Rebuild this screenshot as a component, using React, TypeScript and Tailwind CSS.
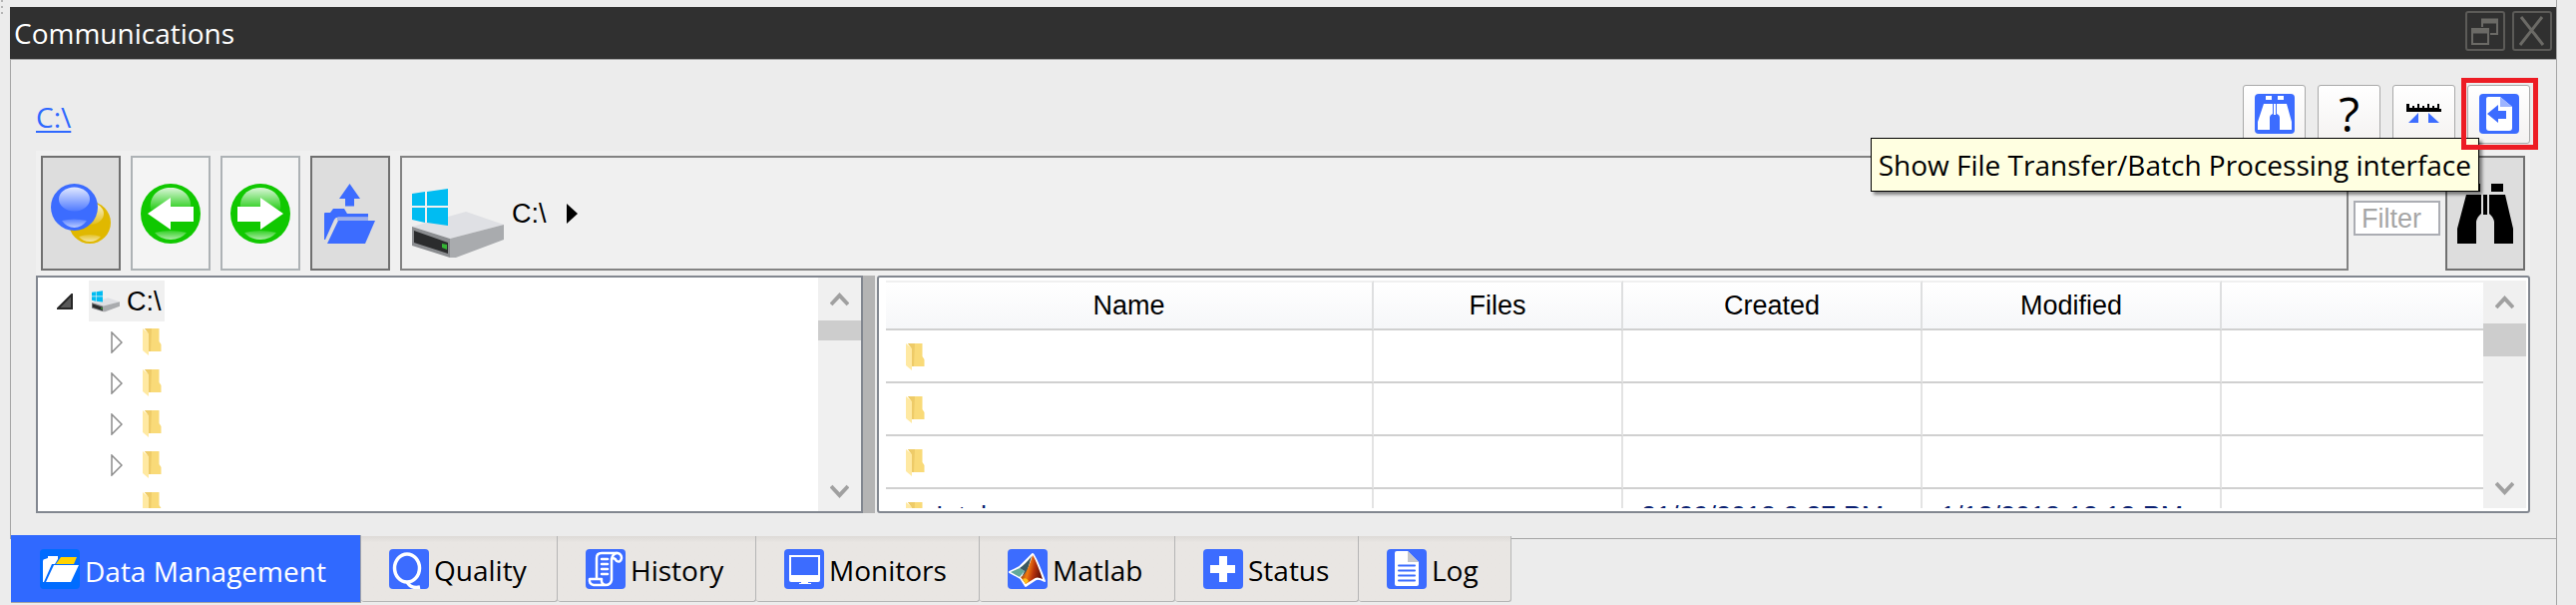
import type { ReactNode } from 'react';

const TEXT = "font-['Open_Sans','Noto_Sans',sans-serif]";
const ARIAL = "font-['Liberation_Sans',Arial,sans-serif]";

/* ---------- Icons ---------- */

function DriveIcon({ className }: { className: string }) {
  return (
    <svg className={className} viewBox="0 0 92 70" aria-hidden="true">
      <path d="M0 38 54 23 92 36 38 50Z" fill="#dfe0e4" />
      <path d="M38 50 92 36V51L44 69 38 69Z" fill="#a9abae" />
      <path d="M0 38 38 50V69L0 57Z" fill="#8b8d90" />
      <path d="M2 42 36 54V65L2 54Z" fill="#2b2c2d" />
      <path d="M30 55 35 56V61L30 59Z" fill="#35b335" />
      <path d="M0 5 13 3V17H0ZM15 3 36 0V17H15ZM0 19H13V34L0 31ZM15 19H36V37L15 34Z" fill="#00bcf2" />
    </svg>
  );
}

function FolderIcon({ className }: { className: string }) {
  return (
    <svg className={className} viewBox="0 0 19 27" aria-hidden="true">
      <path d="M2 0H16.500V13L18.500 16V23H5V4Z" fill="#f9da78" />
      <path d="M2 0H9L8 23H5V4Z" fill="#eecb68" />
      <path d="M0 0 6 5V27L0 22Z" fill="#ffe9a2" />
    </svg>
  );
}

function BallsIcon() {
  return (
    <svg className="size-[60px]" viewBox="0 0 60 60" aria-hidden="true">
      <defs>
        <linearGradient id="ballShine" x1="0" y1="0" x2="0" y2="1">
          <stop offset="0" stopColor="#fff" stopOpacity="0.85" />
          <stop offset="1" stopColor="#fff" stopOpacity="0.1" />
        </linearGradient>
        <linearGradient id="ballGlow" x1="0" y1="0" x2="0" y2="1">
          <stop offset="0" stopColor="#fff" stopOpacity="0.15" />
          <stop offset="1" stopColor="#fff" stopOpacity="0.65" />
        </linearGradient>
      </defs>
      <circle cx="39" cy="39" r="21" fill="#e0b800" />
      <ellipse cx="39" cy="30" rx="14" ry="11" fill="url(#ballShine)" />
      <path d="M28 53Q39 49 50 53Q46 58 39 58Q32 58 28 53Z" fill="url(#ballGlow)" />
      <circle cx="23.500" cy="23.500" r="23.500" fill="#3c6cff" />
      <ellipse cx="23.500" cy="15.500" rx="15.500" ry="12" fill="url(#ballShine)" />
      <path d="M11 37Q23 34 36 37Q31 44 23.500 44Q16 44 11 37Z" fill="url(#ballGlow)" />
    </svg>
  );
}

function ArrowIcon({ flip }: { flip?: boolean }) {
  return (
    <svg className={flip ? 'size-[60px] -scale-x-100' : 'size-[60px]'} viewBox="0 0 60 60" aria-hidden="true">
      <circle cx="30" cy="30" r="30" fill="#10c800" />
      <path d="M10 26C8 12 18 4 30 4S52 12 50 26Z" fill="url(#ballShine)" />
      <path d="M14 49Q30 45 46 49Q40 56 30 56Q20 56 14 49Z" fill="url(#ballGlow)" />
      <path d="M7 30 30 14V23H53V38H30V46Z" fill="#fff" />
    </svg>
  );
}

function FolderUpIcon() {
  return (
    <svg className="size-[60px]" viewBox="0 0 60 60" aria-hidden="true">
      <g fill="#3c6cff">
        <path d="M29.500 0 40 15H34V22.500H25V15H19Z" />
        <path d="M4 30Q4 29 5 29H10L13 25H24L27 30H48V33.500H18Q15 33.500 14 36L5 56H4Z" />
        <path d="M18 37H55L45 60H7Z" />
        <path d="M17 34H48V37H17Z" opacity="0.4" />
      </g>
    </svg>
  );
}

function BinocularsIcon() {
  return (
    <svg className="size-[60px]" viewBox="0 0 60 60" aria-hidden="true">
      <path d="M12 0H25V8H12ZM36 0H48V8H36Z" />
      <path d="M11 11H26V30Q22 33 21 38V60H2V45ZM34 11H50L58 45V60H39V38Q38 33 34 30ZM28 11H32V31H28Z" />
    </svg>
  );
}

function Tile({ children, fill = '#3c6cff' }: { children: ReactNode; fill?: string }) {
  return (
    <svg className="size-10 shrink-0" viewBox="0 0 40 40" aria-hidden="true">
      <rect width="40" height="40" rx="4" fill={fill} />
      {children}
    </svg>
  );
}

function SmallBinoculars() {
  return (
    <Tile>
      <path
        d="M11 2H17V6H11ZM23 2H29V6H23ZM9 10H18V20Q15 21 15 24V36H3V28ZM22 10H32L37 28V36H25V24Q25 21 22 20ZM19 10H21V21H19Z"
        fill="#fff"
      />
    </Tile>
  );
}

function RulerIcon() {
  return (
    <svg className="size-10" viewBox="0 0 40 40" aria-hidden="true">
      <path d="M2 10H5V14H8V12H10V14H13V10H15V14H18V12H20V14H23V10H25V14H28V12H30V14H33V10H35V15H37V18H2Z" />
      <path d="M14 19V29H4ZM24 19V29H35Z" fill="#3c6cff" />
    </svg>
  );
}

function TransferIcon() {
  return (
    <Tile>
      <path d="M9 3H21L33 13V34Q33 37 30 37H10Q7 37 7 34V5Q7 3 9 3Z" fill="#fff" />
      <path d="M21 3 33 13H21Z" fill="#9db4ff" />
      <path d="M8 20 19 11V17H27V25H19V29Z" fill="#3c6cff" />
    </Tile>
  );
}

function DataIcon() {
  return (
    <Tile fill="#006cff">
      <path d="M3 12Q3 10 5 10L8 9V7H18V10L15 15H12L4 33H3Z" fill="#fff" />
      <path d="M21 8H37L34 15H16Z" fill="#ffd200" />
      <path d="M14 16H39L31 33H6Z" fill="#fff" />
    </Tile>
  );
}

function QualityIcon() {
  return (
    <Tile>
      <ellipse cx="18" cy="19" rx="12.500" ry="14" fill="none" stroke="#fff" strokeWidth="3.500" />
      <path d="M18 33Q22 40 31 38" fill="none" stroke="#fff" strokeWidth="3.500" />
    </Tile>
  );
}

function HistoryIcon() {
  return (
    <Tile>
      <g fill="none" stroke="#fff" strokeWidth="2.500" strokeLinejoin="round" strokeLinecap="round">
        <path d="M11 30V9Q11 4 16 4H32Q36 5 36 9Q35 14 31 12Q29 8 26 10V31Q25 36 20 36H8Q3 35 4 30H16Q15 35 20 36" />
        <path d="M31 4Q27 5 26 10" />
        <path d="M16 10H22M16 15H22M16 20H22M16 25H22" />
      </g>
    </Tile>
  );
}

function MonitorIcon() {
  return (
    <Tile>
      <path fillRule="evenodd" d="M5 6H36V31Q36 33 34 33H24V34H27V35H15V34H17V33H7Q5 33 5 31ZM7 8V26H34V8Z" fill="#fff" />
    </Tile>
  );
}

function MatlabIcon() {
  return (
    <Tile>
      <defs>
        <linearGradient id="peak" x1="0" y1="0" x2="1" y2="0.300">
          <stop offset="0" stopColor="#5c1a0c" />
          <stop offset="0.450" stopColor="#f07a10" />
          <stop offset="0.700" stopColor="#b8330b" />
          <stop offset="1" stopColor="#6b1407" />
        </linearGradient>
      </defs>
      <path
        d="M2 23 12 18Q18 12 25 5Q28 8 37 32Q30 28 27 31L18 37L13 29Z"
        fill="#fff"
        stroke="#fff"
        strokeWidth="2"
        strokeLinejoin="round"
      />
      <path d="M3 23 12 19 17 22 12 28Z" fill="#62a99a" />
      <path d="M12 19Q18 15 24 7L19 24 14 28 17 22Z" fill="#3b5961" />
      <path d="M25 6Q28 10 35 30Q29 27 26 30L18 35 13 28Q19 26 25 6Z" fill="url(#peak)" />
      <path d="M15 30Q19 28 21 32L18 35Z" fill="#ffc21a" />
    </Tile>
  );
}

function StatusIcon() {
  return (
    <Tile>
      <path d="M16 7H24V16H32V24H24V33H16V24H7V16H16Z" fill="#fff" />
    </Tile>
  );
}

function LogIcon() {
  return (
    <Tile>
      <path d="M10 2H21L32 13V35Q32 37 30 37H10Q8 37 8 35V4Q8 2 10 2Z" fill="#fff" />
      <path d="M21 2 32 13H21Z" fill="#c4c6ca" />
      <path d="M12 16.500H28M12 21.500H28M12 26.500H28M12 31.500H28" stroke="#3c6cff" strokeWidth="2" strokeLinecap="round" />
    </Tile>
  );
}

/* ---------- Data ---------- */

const tabs = [
  { label: 'Quality', icon: <QualityIcon />, width: 'w-[197px]' },
  { label: 'History', icon: <HistoryIcon />, width: 'w-[199px]' },
  { label: 'Monitors', icon: <MonitorIcon />, width: 'w-[224px]' },
  { label: 'Matlab', icon: <MatlabIcon />, width: 'w-[196px]' },
  { label: 'Status', icon: <StatusIcon />, width: 'w-[184px]' },
  { label: 'Log', icon: <LogIcon />, width: 'w-[153px]' },
];

const columns = ['Name', 'Files', 'Created', 'Modified', ''];

const rows = [
  { name: '', files: '', created: '', modified: '' },
  { name: '', files: '', created: '', modified: '' },
  { name: '', files: '', created: '', modified: '' },
  { name: 'Intel', files: '', created: '21/09/2018 8:27 PM', modified: '1/12/2018 12:12 PM' },
];

/* ---------- Building blocks ---------- */

function SmallButton({ label, children }: { label: string; children: ReactNode }) {
  return (
    <button
      aria-label={label}
      className="flex h-[59px] w-[63px] justify-center rounded-[3px] border border-[#a9a9a9] bg-linear-to-b from-white to-[#f4f2f1] pt-2"
    >
      {children}
    </button>
  );
}

function NavButton({ label, muted, children }: { label: string; muted?: boolean; children: ReactNode }) {
  return (
    <button
      aria-label={label}
      className={`flex h-[115px] w-20 shrink-0 items-center justify-center border-2 ${
        muted ? 'border-[#adb2b5] bg-[#f4f4f4]' : 'border-[#707070] bg-[#dddddd]'
      }`}
    >
      {children}
    </button>
  );
}

function Chevron({ down }: { down?: boolean }) {
  return (
    <svg className={down ? 'h-4 w-[19px] rotate-180' : 'h-4 w-[19px]'} viewBox="0 0 19 16" aria-hidden="true">
      <path d="M1 13 9.500 4 18 13" fill="none" stroke="#a0a0a0" strokeWidth="4" />
    </svg>
  );
}

function ScrollBar({ thumb }: { thumb: ReactNode }) {
  return (
    <div className="flex w-[43px] shrink-0 flex-col items-center bg-[#f0f0f0]">
      <button aria-label="Scroll up" className="flex h-[43px] items-center">
        <Chevron />
      </button>
      {thumb}
      <button aria-label="Scroll down" className="mt-auto flex h-10 items-center">
        <Chevron down />
      </button>
    </div>
  );
}

export default function App() {
  return (
    <div className={`flex min-h-screen bg-[#ececec] text-[28px] leading-10 text-black ${TEXT}`}>
      {/* Drag grip */}
      <div className="flex w-[10px] shrink-0 flex-col gap-1 pl-px">
        <span className="size-[2px] bg-[#b5b5b5]" />
        <span className="size-[2px] bg-[#b5b5b5]" />
        <span className="size-[2px] bg-[#b5b5b5]" />
      </div>

      <main className="min-w-0 flex-1 border-r border-[#a5a5a5] pt-[7px]">
        {/* Title bar */}
        <header className="flex h-[52px] items-center justify-between bg-[#303030] pr-1 pl-1">
          <h1 className="text-white">Communications</h1>
          <div className="flex gap-[7px] pb-1">
            <button aria-label="Restore" className="size-10 rounded-[3px] border-2 border-[#5c5b58]">
              <svg viewBox="0 0 36 36" fill="none" stroke="#6b6a66" strokeWidth="2" aria-hidden="true">
                <path d="M15 14V7H30V21H23M15 9H30M5 16H21V31H5ZM5 18H21" />
                <path d="M14 8H31M4 18H22" strokeWidth="5" />
              </svg>
            </button>
            <button aria-label="Close" className="size-10 rounded-[3px] border-2 border-[#5c5b58]">
              <svg viewBox="0 0 36 36" fill="none" stroke="#6b6a66" strokeWidth="3" aria-hidden="true">
                <path d="M7 4 29 32M28 4 6 32" />
              </svg>
            </button>
          </div>
        </header>

        <section className="border border-r-0 border-[#a5a5a5] pr-[26px] pb-[25px] pl-[25px]">
          <div className="flex justify-between pt-[25px] pb-[7px]">
            <a href="#root" className="mt-3 self-start text-[#2f68ff] underline decoration-2 underline-offset-[3px]">
              C:\
            </a>
            <div className="flex gap-3">
              <SmallButton label="Find">
                <SmallBinoculars />
              </SmallButton>
              <SmallButton label="Help">
                <span className="text-[48px] leading-10">?</span>
              </SmallButton>
              <SmallButton label="Measure">
                <RulerIcon />
              </SmallButton>
              <div className="relative">
                <SmallButton label="File transfer">
                  <TransferIcon />
                </SmallButton>
                <div
                  role="tooltip"
                  className="absolute top-[53px] right-[51px] z-10 border border-black bg-[#ffffe1] px-[7px] py-[6px] whitespace-nowrap shadow-[3px_3px_3px_rgba(0,0,0,0.45)]"
                >
                  Show File Transfer/Batch Processing interface
                </div>
                <div className="pointer-events-none absolute -top-[7px] -right-2 -bottom-[6px] -left-[6px] z-20 border-5 border-[#ed1c24]" />
              </div>
            </div>
          </div>

          {/* Navigation toolbar */}
          <div className="flex items-center bg-[#f0f0f0] p-[5px]">
            <div className="flex gap-[10px]">
              <NavButton label="Places">
                <BallsIcon />
              </NavButton>
              <NavButton label="Back" muted>
                <ArrowIcon />
              </NavButton>
              <NavButton label="Forward" muted>
                <ArrowIcon flip />
              </NavButton>
              <NavButton label="Up one level">
                <FolderUpIcon />
              </NavButton>
            </div>
            <div className={`ml-[10px] flex h-[115px] flex-1 items-center border-2 border-[#838383] pl-[10px] text-[27px] ${ARIAL}`}>
              <DriveIcon className="mt-5 h-[70px] w-[92px]" />
              <span className="ml-2">C:\</span>
              <svg className="ml-5 h-5 w-[11px]" viewBox="0 0 11 20" aria-hidden="true">
                <path d="M0 0 11 10 0 20Z" />
              </svg>
            </div>
            <input
              aria-label="Filter"
              placeholder="Filter"
              className={`mx-[5px] mt-[10px] h-[35px] w-[87px] border-2 border-[#abadb3] bg-white px-[6px] text-[27px] placeholder:text-[#a6a6a6] ${ARIAL}`}
            />
            <NavButton label="Search">
              <BinocularsIcon />
            </NavButton>
          </div>

          <div className={`flex h-[238px] text-[27px] ${ARIAL}`}>
            {/* Folder tree */}
            <div className="flex w-[829px] shrink-0 border-2 border-[#828790] bg-white">
              <ul className="my-[3px] min-w-0 flex-1 overflow-hidden">
                <li className="flex h-[41px] items-center pl-[19px]">
                  <svg className="h-4 w-4" viewBox="0 0 16 16" aria-hidden="true">
                    <path d="M15 1V15H1Z" fill="#595959" stroke="#262626" strokeWidth="2" />
                  </svg>
                  <span className="ml-4 flex h-[41px] items-center gap-[7px] bg-[#f0f0f0] px-[3px]">
                    <DriveIcon className="h-[22px] w-7" />
                    C:\
                  </span>
                </li>
                {[true, true, true, true, false].map((expandable, i) => (
                  <li key={i} className="flex h-[41px] items-center pl-[73px]">
                    <svg className="h-[22px] w-3" viewBox="0 0 12 22" aria-hidden="true">
                      {expandable && <path d="M1 1 11 11 1 21Z" fill="none" stroke="#8c8c8c" strokeWidth="1.500" />}
                    </svg>
                    <FolderIcon className="ml-5 h-[27px] w-[19px]" />
                  </li>
                ))}
              </ul>
              <ScrollBar thumb={<div className="h-5 w-full bg-[#cdcdcd]" />} />
            </div>

            <div className="mr-[2px] w-3 shrink-0 bg-[#b4b4b4]" />

            {/* File list */}
            <div className="flex min-w-0 flex-1 rounded-[3px] border-2 border-[#828790] bg-white py-[3px] pr-[2px] pl-[7px]">
              <div className="min-w-0 flex-1 overflow-hidden">
                <table className="w-full table-fixed border-separate border-spacing-0">
                  <colgroup>
                    <col className="w-[489px]" />
                    <col className="w-[250px]" />
                    <col className="w-[300px]" />
                    <col className="w-[300px]" />
                    <col />
                  </colgroup>
                  <thead>
                    <tr className="h-[50px]">
                      {columns.map((column, i) => (
                        <th
                          key={i}
                          className="border-t-2 border-r-2 border-b-2 border-t-[#f0f0f0] border-r-[#dedfe0] border-b-[#d0d0d0] bg-linear-to-b from-white to-[#f6f7f9] p-0 font-normal last:border-r-0"
                        >
                          {column}
                        </th>
                      ))}
                    </tr>
                  </thead>
                  <tbody>
                    {rows.map((row, i) => (
                      <tr key={i} className="h-[53px] text-[#0a1f70]">
                        <td className="border-r-2 border-b-2 border-r-[#e3e3e3] border-b-[#d0d0d0] p-0 pt-[2px] pl-5">
                          <div className="flex items-center gap-[11px]">
                            <FolderIcon className="h-[27px] w-[19px]" />
                            {row.name}
                          </div>
                        </td>
                        <td className="border-r-2 border-b-2 border-r-[#e3e3e3] border-b-[#d0d0d0] p-0">{row.files}</td>
                        <td className="border-r-2 border-b-2 border-r-[#e3e3e3] border-b-[#d0d0d0] p-0 pt-[2px] pl-[18px]">{row.created}</td>
                        <td className="border-r-2 border-b-2 border-r-[#e3e3e3] border-b-[#d0d0d0] p-0 pt-[2px] pl-[18px]">{row.modified}</td>
                        <td className="border-b-2 border-b-[#d0d0d0] p-0" />
                      </tr>
                    ))}
                  </tbody>
                </table>
              </div>
              <ScrollBar thumb={<div className="h-[33px] w-full bg-[#cdcdcd]" />} />
            </div>
          </div>
        </section>

        {/* Bottom tabs */}
        <nav className="relative -mt-1 flex items-start pl-px">
          <button className="flex h-[68px] w-[351px] items-center gap-[5px] border-r border-b border-[#a5a5a5] bg-[#3069ff] pl-[29px] whitespace-nowrap text-white">
            <DataIcon />
            <span className="pt-1">Data Management</span>
          </button>
          {tabs.map((tab) => (
            <button
              key={tab.label}
              className={`mt-px flex h-[66px] items-center gap-[5px] rounded-b-[3px] border-r border-b border-[#b5b5b5] bg-[#e9e6e3] bg-linear-to-b from-[#dddad7] to-[#e9e6e3] to-10% pl-[28px] whitespace-nowrap ${tab.width}`}
            >
              {tab.icon}
              <span className="pt-[2px]">{tab.label}</span>
            </button>
          ))}
        </nav>
      </main>

      <div className="w-[19px] shrink-0" />
    </div>
  );
}
